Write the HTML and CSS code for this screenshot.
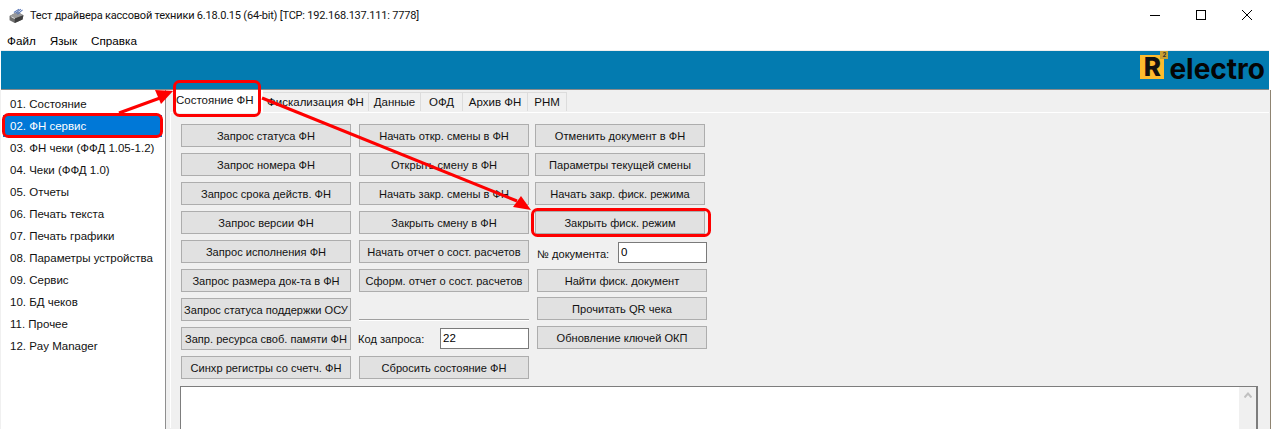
FILE: index.html
```html
<!DOCTYPE html>
<html lang="ru">
<head>
<meta charset="utf-8">
<title>Тест драйвера кассовой техники</title>
<link rel="stylesheet" href="styles.css">
</head>
<body>
<div class="window">
  <header class="titlebar">
    <svg class="app-icon" width="19" height="18" viewBox="0 0 22 18">
      <path d="M3 9 L12 4 L19 8 L18 13 L9 17 L3 14 Z" fill="#6f6f6f"/>
      <path d="M3 9 L9 12 L19 8 L12 4 Z" fill="#9a9a9a"/>
      <path d="M9 12 L9 17 L18 13 L19 8 Z" fill="#3f3f3f"/>
      <path d="M10 6 L16 1 M12 7 L18 2 M8 5 L14 1" stroke="#5a78b8" stroke-width="1.2" fill="none"/>
      <path d="M5 10 L9 12" stroke="#e8e8e8" stroke-width="1"/>
    </svg>
    <span class="title-text">Тест драйвера кассовой техники 6.18.0.15 (64-bit) [TCP: 192.168.137.111: 7778]</span>
    <div class="win-controls">
      <svg width="12" height="12" viewBox="0 0 12 12"><path d="M1 6.5H11" stroke="#000" stroke-width="1"/></svg>
      <svg width="12" height="12" viewBox="0 0 12 12"><rect x="1.5" y="1.5" width="9" height="9" fill="none" stroke="#000"/></svg>
      <svg width="12" height="12" viewBox="0 0 12 12"><path d="M1 1L11 11M11 1L1 11" stroke="#000" stroke-width="1"/></svg>
    </div>
  </header>
  <nav class="menubar"><span>Файл</span><span>Язык</span><span>Справка</span></nav>
  <div class="banner">
    <div class="logo">
      <span class="logo-r">R<span class="logo-sup">2</span></span><span class="logo-word">electro</span>
    </div>
  </div>
  <div class="main">
    <ul class="sidebar">
      <li>01. Состояние</li>
      <li class="selected">02. ФН сервис</li>
      <li>03. ФН чеки (ФФД 1.05-1.2)</li>
      <li>04. Чеки (ФФД 1.0)</li>
      <li>05. Отчеты</li>
      <li>06. Печать текста</li>
      <li>07. Печать графики</li>
      <li>08. Параметры устройства</li>
      <li>09. Сервис</li>
      <li>10. БД чеков</li>
      <li>11. Прочее</li>
      <li>12. Pay Manager</li>
    </ul>
    <section class="content">
      <div class="tabs">
        <span class="tab active">Состояние ФН</span>
        <span class="tab t-fisc">Фискализация ФН</span>
        <span class="tab t-data">Данные</span>
        <span class="tab t-ofd">ОФД</span>
        <span class="tab t-arch">Архив ФН</span>
        <span class="tab t-rnm">РНМ</span>
      </div>
      <div class="panel">
        <div class="columns">
          <div class="col">
            <button class="btn">Запрос статуса ФН</button>
            <button class="btn">Запрос номера ФН</button>
            <button class="btn">Запрос срока действ. ФН</button>
            <button class="btn">Запрос версии ФН</button>
            <button class="btn">Запрос исполнения ФН</button>
            <button class="btn">Запрос размера док-та в ФН</button>
            <button class="btn">Запрос статуса поддержки ОСУ</button>
            <button class="btn">Запр. ресурса своб. памяти ФН</button>
            <button class="btn">Синхр регистры со счетч. ФН</button>
          </div>
          <div class="col">
            <button class="btn">Начать откр. смены в ФН</button>
            <button class="btn">Открыть смену в ФН</button>
            <button class="btn">Начать закр. смены в ФН</button>
            <button class="btn">Закрыть смену в ФН</button>
            <button class="btn">Начать отчет о сост. расчетов</button>
            <button class="btn">Сформ. отчет о сост. расчетов</button>
            <div class="sep-cell"><div class="sep"></div></div>
            <div class="field code"><label>Код запроса:</label><span class="input">22</span></div>
            <button class="btn">Сбросить состояние ФН</button>
          </div>
          <div class="col col3">
            <button class="btn">Отменить документ в ФН</button>
            <button class="btn">Параметры текущей смены</button>
            <button class="btn">Начать закр. фиск. режима</button>
            <button class="btn">Закрыть фиск. режим</button>
            <div class="field doc"><label>№ документа:</label><span class="input">0</span></div>
            <button class="btn shift">Найти фиск. документ</button>
            <button class="btn shift tight">Прочитать QR чека</button>
            <button class="btn shift">Обновление ключей ОКП</button>
          </div>
        </div>
        <div class="log">
          <div class="scrollbar"><svg width="8" height="6" viewBox="0 0 8 6"><path d="M0.5 5.5L4 1.5L7.5 5.5" fill="none" stroke="#c0c0c0" stroke-width="2"/></svg></div>
        </div>
      </div>
    </section>
  </div>
</div>
<svg class="annotations" width="1271" height="429" viewBox="0 0 1271 429">
  <g fill="none" stroke="#fe0000" stroke-width="3">
    <rect x="174.5" y="81.5" width="85" height="34" rx="5"/>
    <rect x="3.5" y="114.5" width="158" height="22" rx="5"/>
    <rect x="532.5" y="209.5" width="177" height="26" rx="5"/>
    <path d="M119 113L160 98"/>
    <path d="M262 98L517 201"/>
  </g>
  <g fill="#fe0000">
    <path d="M173 91L155 90L161 104Z"/>
    <path d="M531 210L513 207L521 196Z"/>
  </g>
</svg>
</body>
</html>
```
FILE: styles.css
```css
* { box-sizing: border-box; }
html, body { margin: 0; padding: 0; }
body {
  width: 1271px;
  height: 429px;
  overflow: hidden;
  background: #fff;
  font-family: "Liberation Sans", Arial, sans-serif;
  font-size: 12px;
  color: #000;
  position: relative;
}
.window { width: 1271px; height: 429px; display: flex; flex-direction: column; overflow: hidden; }
.titlebar { height: 31px; flex: none; display: flex; align-items: center; padding-left: 7px; background: #fff; }
.app-icon { flex: none; margin-right: 4px; }
.title-text { font-family: "Roboto", "Liberation Sans", sans-serif; font-size: 11px; letter-spacing: -0.2px; color: #111; }
.win-controls { margin-left: auto; display: flex; gap: 34px; padding-right: 18px; margin-top: -2px; }
.win-controls svg { display: block; }
.menubar { height: 19px; flex: none; display: flex; gap: 14px; padding-left: 7px; align-items: center; background: #fff; font-size: 11.7px; }
.banner {
  height: 40px; flex: none; margin: 0 2px 0 1px; background: #037bb0;
  border-bottom: 1px solid #8a8a8a; border-top: 1px solid #eee;
  display: flex; justify-content: flex-end; align-items: center; position: relative;
}
.logo { display: flex; align-items: center; padding-right: 4px; font-family: "Inter", "Liberation Sans", sans-serif; font-weight: 700; }
.logo-r {
  position: relative; width: 24px; height: 24px; background: #fdbb2d; color: #111; font-size: 26px; line-height: 24px;
  text-align: center; font-weight: 800; margin-right: 5px; margin-top: -7px;
}
.logo-sup {
  position: absolute; top: -4px; right: -4px; width: 8px; height: 8px; background: #c9a030; color: #333;
  font-size: 6px; line-height: 8px; text-align: center; font-weight: 700;
}
.logo-word { font-size: 28px; line-height: 30px; color: #050505; margin-top: -2px; }

.main { flex: 1; min-height: 0; display: flex; background: #f0f0f0; padding-left: 1px; border-right: 1px solid #8f8471; }
.sidebar {
  list-style: none; margin: 0; padding: 3px 0 0; width: 165px; flex: none; background: #fff;
  border-right: 1px solid #8f8f8f; font-size: 11.5px;
}
.sidebar li { height: 22px; line-height: 22px; padding-left: 9px; color: #111; }
.sidebar li.selected { background: #0078d7; color: #fff; margin: 0 3px 0 2px; padding-left: 7px; }
.content { flex: 1; min-width: 0; padding: 2px 1px 0 4px; }
.tabs { display: flex; height: 20px; padding-left: 5px; position: relative; }
.tab {
  display: block; height: 19px; line-height: 18px; font-size: 11.5px; text-align: center;
  background: #f0f0f0; border: 1px solid #dcdcdc; border-bottom: none; border-left: none; color: #111; white-space: nowrap;
}
.tab.active { width: 88px; height: 22px; background: #fff; margin-top: -2px; line-height: 20px; text-align: left; padding-left: 1px; border: none; }
.t-fisc { width: 106px; }
.t-data { width: 52px; }
.t-ofd { width: 42px; }
.t-arch { width: 65px; }
.t-rnm { width: 39px; }
.panel { height: 316px; border-left: 1px solid #fff; border-top: 1px solid #fff; padding: 11px 0 0 10px; }
.columns { display: flex; gap: 8px; height: 262px; }
.col { width: 170px; display: grid; grid-template-rows: repeat(9, 23px); row-gap: 6px; align-content: start; }
.col3 { margin-left: -2px; grid-template-rows: repeat(4, 23px) 23px 23px 22px 23px; }
.btn {
  width: 170px; height: 23px; padding: 0; background: #e1e1e1; border: 1px solid #adadad; border-radius: 0;
  font-family: inherit; font-size: 11.1px; color: #111; white-space: nowrap; overflow: hidden;
}
.shift { margin-left: 2px; }
.tight { margin-top: -1px; }
.sep-cell { display: flex; align-items: flex-end; }
.sep { width: 170px; height: 2px; background: linear-gradient(#a0a0a0 50%, #fff 50%); }
.field { display: flex; align-items: center; font-size: 11.1px; justify-content: space-between; }
.field label { color: #111; }
.code label { margin-left: -1px; }
.input { display: block; height: 21px; background: #fff; border: 1px solid #7a7a7a; line-height: 18px; padding-left: 2px; font-size: 11.5px; }
.code .input { width: 89px; }
.doc { margin-left: 2px; align-items: flex-end; }
.doc label { padding-bottom: 3px; }
.doc .input { width: 89px; }
.log {
  width: 1078px; height: 60px; margin-left: -1px; background: #fff;
  border: 1px solid #7d7d7d; border-bottom: none; border-right-width: 2px; display: flex; justify-content: flex-end;
}
.scrollbar { width: 17px; height: 100%; background: #f0f0f0; display: flex; justify-content: center; padding-top: 5px; }
.scrollbar svg { display: block; }
.annotations { position: absolute; left: 0; top: 0; pointer-events: none; }
```
